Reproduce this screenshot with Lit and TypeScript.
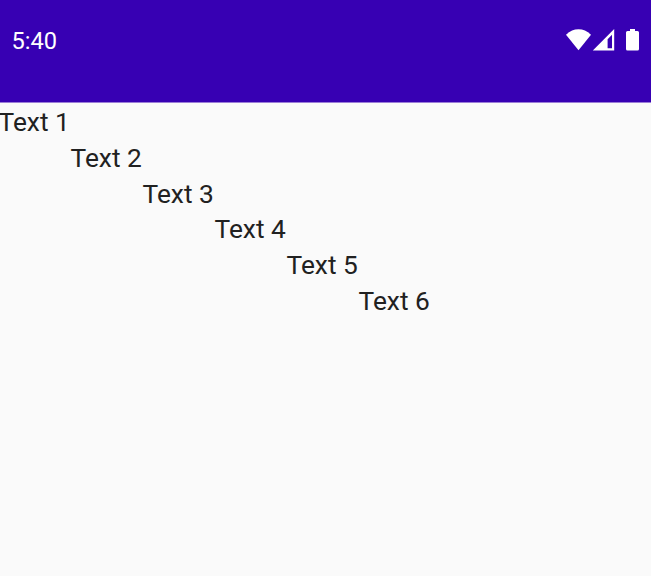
import { LitElement, html, css } from "lit";
import { customElement } from "lit/decorators.js";

@customElement("app-root")
export class AppRoot extends LitElement {
  static styles = css`
    :host { display: block; height: 576px; overflow: hidden; background: #fafafa; font-family: Roboto, sans-serif; }
    .bar { box-sizing: border-box; height: 103px; padding: 28px 11px 0 11.5px; display: flex; justify-content: space-between; align-items: flex-start; background: linear-gradient(#3700b3 102px, #9b7dd7 102px); color: #fff; }
    .time { font-size: 23.6px; line-height: 27px; }
    .icons { display: block; width: 75px; height: 24px; }
    .steps { display: grid; grid-template-columns: repeat(6, 72px); grid-auto-rows: 35.8px; margin-left: -1.5px; padding-top: 1px; color: #212121; }
    .step { font-size: 26.3px; line-height: 36px; white-space: nowrap; }
    .step:nth-child(1) { grid-area: 1 / 1; }
    .step:nth-child(2) { grid-area: 2 / 2; }
    .step:nth-child(3) { grid-area: 3 / 3; }
    .step:nth-child(4) { grid-area: 4 / 4; }
    .step:nth-child(5) { grid-area: 5 / 5; }
    .step:nth-child(6) { grid-area: 6 / 6; }
  `;

  render() {
    return html`
      <header class="bar">
        <span class="time">5:40</span>
        <svg class="icons" viewBox="565 28 75 24" fill="#fff">
          <path d="M566 34.800C570 31 574 29.300 578.500 29.300S587 31 591 34.800L578.500 50.200Z" />
          <path fill-rule="evenodd" d="M614.200 29V50.500H592.800ZM612 34.800L607.600 39.200V48.300H612Z" />
          <path d="M630 29H635V31H637.500Q639 31 639 32.500V49Q639 50.500 637.500 50.500H627.500Q626 50.500 626 49V32.500Q626 31 627.500 31H630Z" />
        </svg>
      </header>
      <main class="steps">
        ${[1, 2, 3, 4, 5, 6].map((n) => html`<span class="step">Text ${n}</span>`)}
      </main>
    `;
  }
}
